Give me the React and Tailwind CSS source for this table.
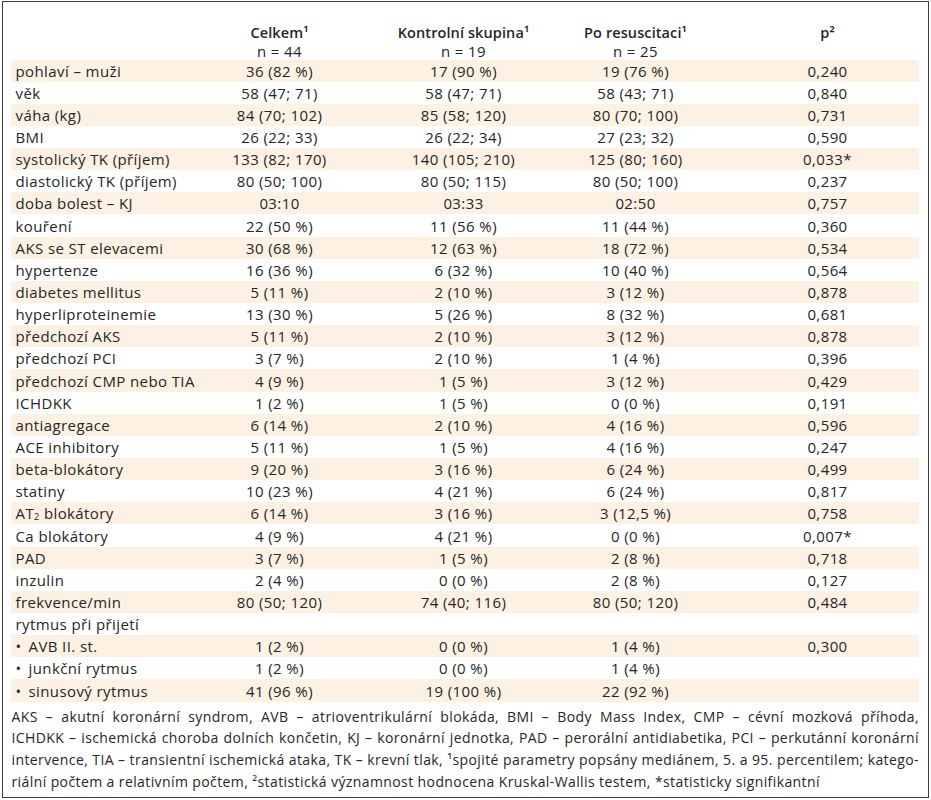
import React from 'react';

const rows = [
    ['pohlaví – muži', '36 (82 %)', '17 (90 %)', '19 (76 %)', '0,240'],
    ['věk', '58 (47; 71)', '58 (47; 71)', '58 (43; 71)', '0,840'],
    ['váha (kg)', '84 (70; 102)', '85 (58; 120)', '80 (70; 100)', '0,731'],
    ['BMI', '26 (22; 33)', '26 (22; 34)', '27 (23; 32)', '0,590'],
    ['systolický TK (příjem)', '133 (82; 170)', '140 (105; 210)', '125 (80; 160)', '0,033*'],
    ['diastolický TK (příjem)', '80 (50; 100)', '80 (50; 115)', '80 (50; 100)', '0,237'],
    ['doba bolest – KJ', '03:10', '03:33', '02:50', '0,757'],
    ['kouření', '22 (50 %)', '11 (56 %)', '11 (44 %)', '0,360'],
    ['AKS se ST elevacemi', '30 (68 %)', '12 (63 %)', '18 (72 %)', '0,534'],
    ['hypertenze', '16 (36 %)', '6 (32 %)', '10 (40 %)', '0,564'],
    ['diabetes mellitus', '5 (11 %)', '2 (10 %)', '3 (12 %)', '0,878'],
    ['hyperliproteinemie', '13 (30 %)', '5 (26 %)', '8 (32 %)', '0,681'],
    ['předchozí AKS', '5 (11 %)', '2 (10 %)', '3 (12 %)', '0,878'],
    ['předchozí PCI', '3 (7 %)', '2 (10 %)', '1 (4 %)', '0,396'],
    ['předchozí CMP nebo TIA', '4 (9 %)', '1 (5 %)', '3 (12 %)', '0,429'],
    ['ICHDKK', '1 (2 %)', '1 (5 %)', '0 (0 %)', '0,191'],
    ['antiagregace', '6 (14 %)', '2 (10 %)', '4 (16 %)', '0,596'],
    ['ACE inhibitory', '5 (11 %)', '1 (5 %)', '4 (16 %)', '0,247'],
    ['beta-blokátory', '9 (20 %)', '3 (16 %)', '6 (24 %)', '0,499'],
    ['statiny', '10 (23 %)', '4 (21 %)', '6 (24 %)', '0,817'],
    ['AT2', '6 (14 %)', '3 (16 %)', '3 (12,5 %)', '0,758'],
    ['Ca blokátory', '4 (9 %)', '4 (21 %)', '0 (0 %)', '0,007*'],
    ['PAD', '3 (7 %)', '1 (5 %)', '2 (8 %)', '0,718'],
    ['inzulin', '2 (4 %)', '0 (0 %)', '2 (8 %)', '0,127'],
    ['frekvence/min', '80 (50; 120)', '74 (40; 116)', '80 (50; 120)', '0,484'],
    ['rytmus při přijetí', '', '', '', ''],
    ['• AVB II. st.', '1 (2 %)', '0 (0 %)', '1 (4 %)', '0,300'],
    ['• junkční rytmus', '1 (2 %)', '0 (0 %)', '1 (4 %)', ''],
    ['• sinusový rytmus', '41 (96 %)', '19 (100 %)', '22 (92 %)', ''],
];

const Label = ({ text }) => {
    if (text === 'AT2') {
        return (
            <span>AT<sub className="text-[9px] relative top-[1px]">2</sub> blokátory</span>
        );
    }
    if (text.startsWith('• ')) {
        return (
            <span className="flex">
                <span className="w-[13px]">•</span>
                {text.slice(2)}
            </span>
        );
    }
    return <span>{text}</span>;
};

const grid = 'grid grid-cols-[180px_178px_190px_154px_204px] items-center';

export default function App() {
    return (
        <div className="w-[931px] h-[800px] bg-white pt-[1px] pl-[2px] font-['Open_Sans','Lato',sans-serif] text-[#262626]">
            <div className="w-[927px] h-[797px] border-[1.5px] border-[#3c3c3c] pl-[7.5px] pr-[9px] pt-[21px]">

                {/* Header */}
                <div className={`${grid} h-[20px] leading-[20px] text-[14.5px] tracking-[0.1px] font-semibold`}>
                    <div />
                    <div className="text-center">Celkem¹</div>
                    <div className="text-center">Kontrolní skupina¹</div>
                    <div className="text-center">Po resuscitaci¹</div>
                    <div className="text-center pl-[26px]">p²</div>
                </div>
                <div className={`${grid} h-[16.5px] leading-[16.5px] text-[15px] tracking-[0.4px]`}>
                    <div />
                    <div className="text-center">n = 44</div>
                    <div className="text-center">n = 19</div>
                    <div className="text-center">n = 25</div>
                    <div />
                </div>

                {/* Rows */}
                <div className="text-[15px] leading-[22px] tracking-[0.4px]">
                    {rows.map((r, i) => (
                        <div
                            key={i}
                            className={`${grid} h-[22.15px] ${i % 2 === 0 ? 'bg-[#fdf1e3]' : ''}`}
                        >
                            <div className="pl-[5px] whitespace-nowrap"><Label text={r[0]} /></div>
                            <div className="text-center">{r[1]}</div>
                            <div className="text-center">{r[2]}</div>
                            <div className="text-center">{r[3]}</div>
                            <div className="text-center pl-[26px]">{r[4]}</div>
                        </div>
                    ))}
                </div>

                {/* Footnote */}
                <div className="mt-[4px] text-[14px] tracking-[0.4px] leading-[21.7px] pl-[1px]">
                    <div className="text-justify [text-align-last:justify]">
                        AKS – akutní koronární syndrom, AVB – atrioventrikulární blokáda, BMI – Body Mass Index, CMP – cévní mozková příhoda,
                    </div>
                    <div className="text-justify [text-align-last:justify]">
                        ICHDKK – ischemická choroba dolních končetin, KJ – koronární jednotka, PAD – perorální antidiabetika, PCI – perkutánní koronární
                    </div>
                    <div className="text-justify [text-align-last:justify]">
                        intervence, TIA – transientní ischemická ataka, TK – krevní tlak, ¹spojité parametry popsány mediánem, 5. a 95. percentilem; katego-
                    </div>
                    <div>
                        riální počtem a relativním počtem, ²statistická významnost hodnocena Kruskal-Wallis testem, *statisticky signifikantní
                    </div>
                </div>
            </div>
        </div>
    );
}
